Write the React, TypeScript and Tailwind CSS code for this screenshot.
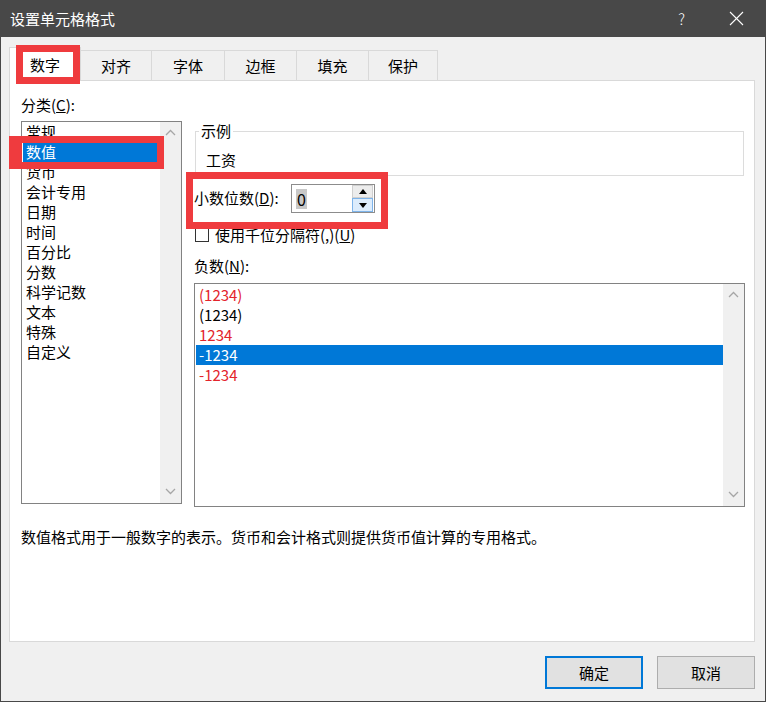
import React from "react";

const FONT = "font-['Noto_Sans_CJK_SC','Noto_Sans',sans-serif]";

function ChevronUp() {
  return (
    <svg width="11" height="7" viewBox="0 0 11 7">
      <polyline points="1,6 5.5,1.5 10,6" fill="none" stroke="#a6a6a6" strokeWidth="1.3" />
    </svg>
  );
}
function ChevronDown() {
  return (
    <svg width="11" height="7" viewBox="0 0 11 7">
      <polyline points="1,1 5.5,5.5 10,1" fill="none" stroke="#a6a6a6" strokeWidth="1.3" />
    </svg>
  );
}

function Scrollbar() {
  return (
    <div className="w-[21px] self-stretch bg-[#f0f0f0] flex flex-col items-center justify-between pt-[7px] pb-[8px]">
      <ChevronUp />
      <ChevronDown />
    </div>
  );
}

const categories = ["常规", "数值", "货币", "会计专用", "日期", "时间", "百分比", "分数", "科学记数", "文本", "特殊", "自定义"];

const negatives: { text: string; red: boolean }[] = [
  { text: "(1234)", red: true },
  { text: "(1234)", red: false },
  { text: "1234", red: true },
  { text: "-1234", red: false },
  { text: "-1234", red: true },
];

const tabs = [
  { label: "数字", w: "w-[72px]" },
  { label: "对齐", w: "w-[71px]" },
  { label: "字体", w: "w-[73px]" },
  { label: "边框", w: "w-[72px]" },
  { label: "填充", w: "w-[72px]" },
  { label: "保护", w: "w-[69px]" },
];

export default function App() {
  return (
    <div className={`relative w-[766px] h-[702px] bg-[#484848] flex flex-col text-[15px] text-black ${FONT}`}>
      {/* Title bar */}
      <div className="h-[37px] flex items-center pl-[10px] text-white shrink-0">
        <span className="text-[15px] leading-[20px]">设置单元格格式</span>
        <span className="ml-auto mr-[44px] text-[15px] font-light leading-[20px]">?</span>
        <svg width="15" height="15" viewBox="0 0 15 15" className="mr-[22px]">
          <line x1="1" y1="1" x2="14" y2="14" stroke="#ffffff" strokeWidth="1.1" />
          <line x1="14" y1="1" x2="1" y2="14" stroke="#ffffff" strokeWidth="1.1" />
        </svg>
      </div>

      {/* Body */}
      <div className="flex-1 mx-[1px] mb-[1px] bg-[#f0f0f0] pl-[8px] pt-[10px] flex flex-col">
        {/* Tabs */}
        <div className="flex items-end">
          {tabs.map((t, i) =>
            i === 0 ? (
              <div
                key={t.label}
                className={`${t.w} h-[34px] -mb-px relative z-10 bg-white border border-b-0 border-[#d9d9d9] flex items-center justify-center leading-[20px]`}
              >
                {t.label}
              </div>
            ) : (
              <div
                key={t.label}
                className={`${t.w} h-[30px] bg-[#f0f0f0] border-t border-r border-[#d9d9d9] flex items-center justify-center leading-[20px]`}
              >
                {t.label}
              </div>
            )
          )}
        </div>

        {/* Panel */}
        <div className="w-[746px] h-[562px] bg-white border border-[#d9d9d9] pl-[11px] pt-[14px] flex flex-col">
          <div className="flex gap-[12px]">
            {/* Left column */}
            <div className="w-[161px] flex flex-col">
              <div className="h-[20px] leading-[20px]">
                分类(<span className="underline">C</span>):
              </div>
              <div className="mt-[6px] h-[383px] border border-[#828282] flex">
                <div className="flex-1 pl-[1px]">
                  {categories.map((c, i) => (
                    <div
                      key={c}
                      className={`h-[20px] leading-[20px] pl-[3px] ${i === 1 ? "bg-[#0078d7] text-white" : ""}`}
                    >
                      {c}
                    </div>
                  ))}
                </div>
                <Scrollbar />
              </div>
            </div>

            {/* Right column */}
            <div className="w-[551px] mt-[26px] flex flex-col">
              <fieldset className="ml-px w-[549px] border border-[#dcdcdc] pb-[6px]">
                <legend className="ml-[3px] px-[2px] leading-[20px]">示例</legend>
                <div className="pt-[9px] pl-[10px] h-[28px] leading-[20px]">工资</div>
              </fieldset>

              <div className="mt-[8px] flex items-center">
                <div className="w-[97px] leading-[20px] -mt-[1px]">
                  小数位数(<span className="underline">D</span>):
                </div>
                <div className="w-[84px] h-[29px] border border-[#8c8c8c] flex items-center bg-white">
                  <div className="flex-1 pl-[4px] flex items-center">
                    <span className="bg-[#c8c8c8] leading-[20px] text-[16px] px-px">0</span>
                  </div>
                  <div className="w-[21px] h-[27px] flex flex-col mr-px">
                    <div className="h-[13px] bg-[#ececec] border border-[#cfcfcf] flex items-center justify-center">
                      <svg width="8" height="5" viewBox="0 0 8 5">
                        <polygon points="0,5 4,0 8,5" fill="#000" />
                      </svg>
                    </div>
                    <div className="h-[14px] bg-[#dcecfc] border border-[#7eb4ea] flex items-center justify-center">
                      <svg width="8" height="5" viewBox="0 0 8 5">
                        <polygon points="0,0 8,0 4,5" fill="#000" />
                      </svg>
                    </div>
                  </div>
                </div>
              </div>

              <div className="mt-[12px] h-[20px] flex items-center">
                <div className="ml-px w-[14px] h-[14px] border border-[#333333] bg-white" />
                <div className="ml-[6px] leading-[20px] -mt-[1px]">
                  使用千位分隔符(,)(<span className="underline">U</span>)
                </div>
              </div>

              <div className="mt-[11px] h-[20px] leading-[20px]">
                负数(<span className="underline">N</span>):
              </div>

              <div className="mt-[7px] h-[224px] border border-[#828282] flex">
                <div className="flex-1 pl-[1px] pt-[1px]">
                  {negatives.map((n, i) => (
                    <div
                      key={i}
                      className={`h-[20px] leading-[20px] pl-[3px] ${
                        i === 3 ? "bg-[#0078d7] text-white" : n.red ? "text-[#e3242b]" : "text-black"
                      }`}
                    >
                      {n.text}
                    </div>
                  ))}
                </div>
                <Scrollbar />
              </div>
            </div>
          </div>

          <div className="mt-[20px] leading-[20px]">
            数值格式用于一般数字的表示。货币和会计格式则提供货币值计算的专用格式。
          </div>
        </div>

        {/* Footer buttons */}
        <div className="mt-[14px] pr-[10px] flex justify-end gap-[14px]">
          <button className="w-[98px] h-[33px] bg-[#e1e1e1] border-2 border-[#0078d7] flex items-center justify-center leading-[20px]">
            确定
          </button>
          <button className="w-[98px] h-[33px] bg-[#e1e1e1] border border-[#adadad] flex items-center justify-center leading-[20px]">
            取消
          </button>
        </div>
      </div>

      {/* Red annotation boxes */}
      <div className="absolute z-20 left-[16px] top-[45px] w-[64px] h-[39px] border-[7px] border-[#ef3b3e] pointer-events-none" />
      <div className="absolute z-20 left-[9px] top-[136px] w-[155px] h-[33px] border-[7px] border-l-[13px] border-[#ef3b3e] pointer-events-none" />
      <div className="absolute z-20 left-[186px] top-[172px] w-[202px] h-[57px] border-[7px] border-[#ef3b3e] pointer-events-none" />
    </div>
  );
}
